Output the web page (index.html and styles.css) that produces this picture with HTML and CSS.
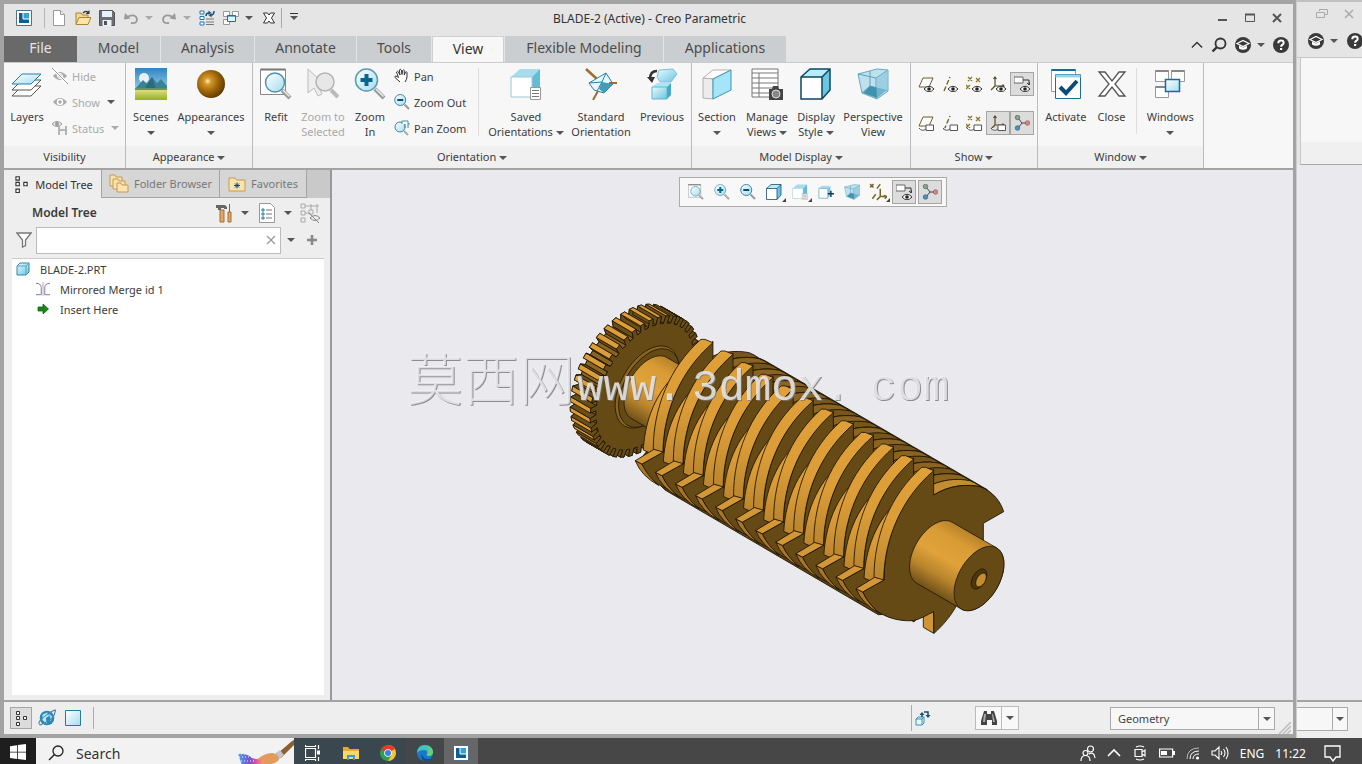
FILE: index.html
```html
<!DOCTYPE html>
<html lang="en">
<head>
<meta charset="utf-8">
<title>BLADE-2 (Active) - Creo Parametric</title>
<link rel="stylesheet" href="styles.css">
</head>
<body>
<svg class="sprite" aria-hidden="true">
  <defs>
    <linearGradient id="glass" x1="0" y1="0" x2="1" y2="1"><stop offset="0" stop-color="#fff"/><stop offset="1" stop-color="#a5dcf0"/></linearGradient>
    <linearGradient id="cyan" x1="0" y1="0" x2="1" y2="1"><stop offset="0" stop-color="#e9f9fe"/><stop offset="1" stop-color="#6cc4e0"/></linearGradient>
    <linearGradient id="sky" x1="0" y1="0" x2="0" y2="1"><stop offset="0" stop-color="#2c85c4"/><stop offset="1" stop-color="#d5eef8"/></linearGradient>
    <linearGradient id="grass" x1="0" y1="0" x2="0" y2="1"><stop offset="0" stop-color="#e3dd7c"/><stop offset="1" stop-color="#93ad2b"/></linearGradient>
    <linearGradient id="edge" x1="0" y1="0" x2="1" y2="1"><stop offset="0" stop-color="#1673c4"/><stop offset="1" stop-color="#5dd879"/></linearGradient>
    <linearGradient id="brush" x1="0" y1="0" x2="1" y2="0"><stop offset="0" stop-color="#4aa4f0"/><stop offset=".45" stop-color="#7a4fd0"/><stop offset=".7" stop-color="#e0559a"/><stop offset="1" stop-color="#f0a860"/></linearGradient>
    <radialGradient id="gold" cx=".38" cy=".4" r=".65"><stop offset="0" stop-color="#fff3c0"/><stop offset=".18" stop-color="#d99a2c"/><stop offset=".6" stop-color="#9a6208"/><stop offset="1" stop-color="#5c3902"/></radialGradient>
    <linearGradient id="shaft"><stop offset="0" stop-color="#b98329"/><stop offset=".2" stop-color="#d99b35"/><stop offset=".5" stop-color="#e0a23a"/><stop offset=".75" stop-color="#b8842c"/><stop offset="1" stop-color="#6f5119"/></linearGradient>
    <linearGradient id="rim" x1="0" y1="0" x2="0" y2="1"><stop offset="0" stop-color="#dfa038"/><stop offset=".5" stop-color="#dc9d38"/><stop offset="1" stop-color="#b9842e"/></linearGradient>

    <symbol id="i-app" viewBox="0 0 16 16"><path d="M.5.5h15v15H.5z" fill="#fff" stroke="#4d6f8c"/><path d="M3 3h10v10H3z" fill="#0b5f94"/><path d="M7 3h6v6H7z" fill="#2ba6dc"/><path d="M7 3v6h6" fill="none" stroke="#fff"/></symbol>
    <symbol id="i-new" viewBox="0 0 16 16"><path d="M2.500.5h7l4 4v11h-11z" fill="#fff" stroke="#999"/><path d="M9.500.5v4h4" fill="#eee" stroke="#999"/></symbol>
    <symbol id="i-open" viewBox="0 0 16 16"><path d="M1 14V3h5l1.500 2H13v3" fill="#f5d98b" stroke="#a8843a"/><path d="M1 14.500 4 7.500h12l-3 7z" fill="#fbe6a5" stroke="#a8843a"/><path d="M8 3q3-3 5-.5" fill="none" stroke="#333" stroke-width="1.300"/><path d="M14.500 0v4h-4z" fill="#333"/></symbol>
    <symbol id="i-save" viewBox="0 0 16 16"><path d="M.5.5h13l2 2v13H.5z" fill="#6b6f75" stroke="#555"/><path d="M3 1h10v6H3z" fill="#e6f3fa"/><path d="M3.500 10h9v6h-9z" fill="#eee"/><path d="M5 11h3v4H5z" fill="#456"/></symbol>
    <symbol id="i-undo" viewBox="0 0 16 16"><path d="M5 6.500q8-3 9 2.500 0 5-6 4" fill="none" stroke="#999" stroke-width="1.800"/><path d="M1 9.500 2 3l5.500 5.500z" fill="#999"/></symbol>
    <symbol id="i-regen" viewBox="0 0 16 16"><path d="M1 1h4v3H1zM1 6.500h4v3H1zM1 12h4v3H1z" fill="#fff" stroke="#2779a8"/><path d="M7 9h8M7 12h8M7 14.500h8" stroke="#777"/><path d="M7 6q0-3 3-3M15 1q0 4-3 4" fill="none" stroke="#13517c" stroke-width="1.500"/><path d="M9.500.5v5l3-2.500zM12.500 2.500v5l-3-2.500z" fill="#13517c"/></symbol>
    <symbol id="i-wins" viewBox="0 0 16 16"><path d="M.5 1.500h6v5h-6zM9.500 1.500h6v5h-6zM.5 9.500h6v5h-6z" fill="#fff" stroke="#999"/><path d="M4.500 5.500h8v6h-8z" fill="#e4f5fb" stroke="#1c7396"/><path d="M4.500 5.800h8" stroke="#1c7396" stroke-width="1.500"/></symbol>
    <symbol id="i-closex" viewBox="0 0 32 32"><path d="M3 4h6l7 9 7-9h6L19 16l10 12h-6l-7-9-7 9H3l10-12z" fill="#fff" stroke="#555" stroke-width="1.300"/></symbol>
    <symbol id="i-closexs" viewBox="0 0 16 16"><path d="M2.500 3h4L8 5l1.500-2h4L10.500 8l3 5h-4L8 11l-1.500 2h-4l3-5z" fill="#fff" stroke="#333"/></symbol>
    <symbol id="i-search" viewBox="0 0 16 16"><circle cx="9.500" cy="6.500" r="5" fill="none" stroke="currentColor" stroke-width="1.800"/><path d="m6 10-4.500 4.500" stroke="currentColor" stroke-width="2.400"/></symbol>
    <symbol id="i-learn" viewBox="0 0 16 16"><circle cx="8" cy="8" r="8" fill="#3a3a3a"/><path d="M2 6.500 8 3.500l6 3-6 3z" fill="none" stroke="#fff" stroke-width="1.200"/><path d="M4 8.500v3q4 2.500 8 0v-3l-4 2z" fill="#fff"/></symbol>
    <symbol id="i-help" viewBox="0 0 16 16"><circle cx="8" cy="8" r="8" fill="#3a3a3a"/><path d="M5.300 6.200q0-2.700 2.700-2.700t2.700 2.400c0 1.900-2.600 1.700-2.600 3.900" fill="none" stroke="#fff" stroke-width="2"/><path d="M7 11h2.200v2H7z" fill="#fff"/></symbol>

    <symbol id="i-layers" viewBox="0 0 32 32"><g stroke="#555"><path d="M1 28h19l10-10H11z" fill="#fff"/><path d="M1 22h19l10-10H11z" fill="#fff"/><path d="M1 16h19l10-10H11z" fill="url(#glass)" stroke="#2580a6"/></g></symbol>
    <symbol id="i-eye" viewBox="0 0 16 16"><path d="M1 8q7-8 14 0-7 8-14 0z" fill="#aaa"/><circle cx="8" cy="8" r="2.500" fill="#aaa" stroke="#fff" stroke-width="1.500"/></symbol>
    <symbol id="i-hide" viewBox="0 0 16 16"><path d="M1 8q7-8 14 0-7 8-14 0z" fill="#aaa"/><circle cx="8" cy="8" r="2.500" fill="#999" stroke="#fff"/><path d="m0 0 16 16" stroke="#fff" stroke-width="3"/><path d="m0 0 16 16" stroke="#999"/></symbol>
    <symbol id="i-status" viewBox="0 0 16 16"><path d="M0 4q5-5 10 0-5 5-10 0z" fill="#eee" stroke="#999"/><circle cx="5" cy="4" r="2" fill="#999"/><path d="M6 6h9v9H6z" fill="#b5b5b5"/><path d="M8 6h5v3H8zM8 11h5v4H8z" fill="#f3f3f3"/></symbol>
    <symbol id="i-scenes" viewBox="0 0 32 32"><path d="M0 0h32v32H0z" fill="url(#sky)"/><circle cx="9" cy="10" r="5" fill="#fff" opacity=".85"/><path d="m0 21 8-9 4 4 5-7 5 6 4-4 6 7v6H0z" fill="#3b8295"/><path d="m12 16 5-7 4 12H10z" fill="#2b6b80"/><path d="M0 20h32v3H0z" fill="#62965b"/><path d="M0 22h32v10H0z" fill="url(#grass)"/></symbol>
    <symbol id="i-ball" viewBox="0 0 32 32"><circle cx="16" cy="16" r="14" fill="url(#gold)"/></symbol>
    <symbol id="i-refit" viewBox="0 0 32 32"><path d="M.500 1.500h25v25H.500z" fill="#fff" stroke="#888"/><path d="M.5 1.500h25" stroke="#777" stroke-width="2"/><path d="m22 22 8 8" stroke="#999" stroke-width="4"/><path d="m23 22 6.500 6.500" stroke="#eee" stroke-width="1.500"/><circle cx="15" cy="14.500" r="9.500" fill="url(#glass)" stroke="#4b90ad" stroke-width="1.400"/></symbol>
    <symbol id="i-zsel" viewBox="0 0 32 32"><path d="m1 1 16 15-6 2 4 8-4 2-4-8-6 5z" fill="#eee" stroke="#bbb"/><path d="m24 22 7 7" stroke="#bbb" stroke-width="4"/><circle cx="18" cy="14" r="9" fill="#e7e7e7" stroke="#b5b5b5" stroke-width="1.500"/></symbol>
    <symbol id="i-zin" viewBox="0 0 32 32"><path d="m21 21 9 9" stroke="#999" stroke-width="4"/><path d="m22 21 7.500 7.500" stroke="#eee" stroke-width="1.500"/><circle cx="12.500" cy="12" r="11" fill="url(#glass)" stroke="#5a9ab4" stroke-width="1.500"/><path d="M12.500 6v12M6.500 12h12" stroke="#08658e" stroke-width="4"/></symbol>
    <symbol id="i-zout" viewBox="0 0 32 32"><path d="m21 21 9 9" stroke="#999" stroke-width="4"/><circle cx="12.500" cy="12" r="11" fill="url(#glass)" stroke="#3c87a8" stroke-width="2"/><path d="M6.500 12h12" stroke="#084f74" stroke-width="4"/></symbol>
    <symbol id="i-pan" viewBox="0 0 16 16"><path d="M6 14 1 9.500Q.5 8 2 8l2.500 1.500L2.500 4q.8-1.500 2 0l1.500 3-.7-5q1-1.500 2 0l.7 4.500.5-4q1-1.200 1.800 0v4.500l1.200-3q1.200-.8 1.500.5L13 9q-.5 3-2 5" fill="#fff" stroke="#333"/></symbol>
    <symbol id="i-pzoom" viewBox="0 0 16 16"><circle cx="6" cy="7" r="5" fill="url(#glass)" stroke="#3c87a8"/><path d="m10 11 4 4" stroke="#aaa" stroke-width="2"/><path d="M8 4V1h6v3h2M11 4v4M14 4v4" fill="#fff" stroke="#4a8ba5"/></symbol>
    <symbol id="i-saved" viewBox="0 0 32 32"><path d="m1 9 9-8h20l-8 8z" fill="#a6dcec"/><path d="m22 9 8-8v20l-8 8z" fill="#62bcd4"/><path d="M1 9h21v20H1z" fill="#fff" stroke="#9bc9d8"/><path d="M20.500 19.500h10v12h-10z" fill="#fff" stroke="#999"/><path d="M22 22.500h7M22 25.500h7M22 28.500h7" stroke="#777"/></symbol>
    <symbol id="i-std" viewBox="0 0 32 32"><path d="m1 1 11 10" stroke="#a06b2b" stroke-width="2.500"/><path d="m4 15 17-10 7 11-9 9-10-3z" fill="#e6f8fd" stroke="#2580a6"/><path d="m17 14 11 2-9 9-5-4z" fill="#3f9fb9"/><path d="m4 15 13-1 4-9M17 14l-5 9" fill="none" stroke="#2580a6"/><path d="M24 15h8M13 23 8 32" stroke="#a06b2b" stroke-width="2"/></symbol>
    <symbol id="i-prev" viewBox="0 0 32 32"><path d="m13 2 14-1 4 5-6 8H14l-3-5z" fill="url(#cyan)" stroke="#7cc2d8"/><path d="M6 19 11 15h14l-3 4z" fill="#aee5f4"/><path d="M6 19h15v12H6z" fill="url(#cyan)" stroke="#65b7d0"/><path d="m21 19 4-4v12l-4 4z" fill="#4aa9c6"/><path d="M11 3q-7 0-7 8" fill="none" stroke="#333" stroke-width="2.500"/><path d="M1 9h8l-3 6z" fill="#333"/></symbol>
    <symbol id="i-section" viewBox="0 0 32 32"><path d="m2 10 10-8h18L12 11z" fill="#fff" stroke="#c9a9a9"/><path d="M2 10l10 1v20l-10-1z" fill="#ececec" stroke="#b0b0b0"/><path d="m12 11 18-9v20L12 31z" fill="#a6e4fa" stroke="#3297b8"/></symbol>
    <symbol id="i-mviews" viewBox="0 0 32 32"><path d="M1 1h26v28H1zM1 5h26M1 10h26M1 15h26M1 20h26M1 25h26M8 5v24" fill="#fff" stroke="#777"/><path d="M18 21h3l1-3h5l1 3h4v11H18z" fill="#444"/><circle cx="25" cy="26" r="4" fill="#888" stroke="#ddd"/></symbol>
    <symbol id="i-cube" viewBox="0 0 32 32"><path d="m1 9 9-8h20l-8 8z" fill="#b8ecfb"/><path d="m22 9 8-8v21l-8 9z" fill="#6cc6e2"/><path d="M1 9h21v22H1z" fill="#fff"/><path d="M1 31V9l9-8h20v21l-8 9zM1 9h21v22M22 9l8-8" fill="none" stroke="#0b4763" stroke-width="1.500"/></symbol>
    <symbol id="i-persp" viewBox="0 0 32 32"><path d="M1 6 20 1l11 1v21L20 31 5 25z" fill="#bfe1ee" stroke="#6ea8bf"/><path d="m1 6 18 4 12-8M19 10v21M13 3v15l18 5M13 18 5 25" fill="none" stroke="#5da1ba"/><path d="m13 18 16 4-9 8-14-5z" fill="#3f93b1"/><path d="m19 10 12-8v21l-11 8z" fill="#88c5da" opacity=".65"/></symbol>
    <symbol id="i-activate" viewBox="0 0 32 32"><path d="M1.500 1.500h24v22h-24z" fill="#fff" stroke="#999"/><path d="M1.500 2h24" stroke="#156b95" stroke-width="2"/><path d="M5.500 6.500h25v24h-25z" fill="#fff" stroke="#1c6f97"/><path d="M5.500 8h25" stroke="#9bd2e8" stroke-width="3"/><path d="m10 19 6 6L27 13" fill="none" stroke="#074d76" stroke-width="4"/></symbol>
    <symbol id="i-winsb" viewBox="0 0 32 32"><path d="M1.500 2.500h13v11h-13zM17.500 2.500h13v11h-13zM1.500 18.500h13v11h-13z" fill="#fff" stroke="#999"/><path d="M1.500 3h13M17.500 3h13M1.500 19h13" stroke="#888" stroke-width="2"/><path d="M11.500 11.500h14v12h-14z" fill="url(#glass)" stroke="#0d7199" stroke-width="1.500"/></symbol>

    <symbol id="b-eye" viewBox="0 0 16 16"><path d="M6 13q5-5.500 10 0-5 5.500-10 0z" fill="#fff" stroke="#333"/><circle cx="11" cy="13" r="1.800" fill="#222"/></symbol>
    <symbol id="b-tag" viewBox="0 0 16 16"><path d="M8 10h7.500v5.500H8zM1 13q3 4 7 1" fill="#fff" stroke="#555"/></symbol>
    <symbol id="i-plane" viewBox="0 0 16 16"><path d="m1 11 4-9h10l-4 9z" fill="#fff" stroke="#6e5b26"/></symbol>
    <symbol id="i-axis" viewBox="0 0 16 16"><path d="M2 15 8 1" stroke="#776320" stroke-width="1.400" stroke-dasharray="5 2"/></symbol>
    <symbol id="i-points" viewBox="0 0 16 16"><path d="m2 1 4 4m0-4L2 5m8-3 4 4m0-4-4 4M0 9l4 4m0-4-4 4" stroke="#8a7420" stroke-width="1.300"/></symbol>
    <symbol id="i-csys" viewBox="0 0 16 16"><path d="M5 1v9h9M5 10l-4 4M3.500 3 5 1l1.500 2M12.500 8.500l1.500 1.500-1.500 1.500" fill="none" stroke="#5b4b22" stroke-width="1.200"/></symbol>
    <symbol id="i-annot" viewBox="0 0 16 16"><path d="M0 1h9v6H0z" fill="#fff" stroke="#666"/><path d="M9 4h6v5m-2-2 2 2 1-3" fill="none" stroke="#333"/></symbol>
    <symbol id="i-spin" viewBox="0 0 16 16"><path d="m4 3 4 5h6M8 8l-4 5" fill="none" stroke="#444"/><circle cx="3.500" cy="2.500" r="2.300" fill="#7fa58d" stroke="#555" stroke-width=".6"/><circle cx="13.500" cy="8" r="2.300" fill="#d28a82" stroke="#944" stroke-width=".6"/><circle cx="3.500" cy="13" r="2.300" fill="#4d91bd" stroke="#356" stroke-width=".6"/></symbol>
    <symbol id="i-dtm" viewBox="0 0 16 16"><path d="m1 1 3 3m0-3L1 4m6 1 3-4M3 14l3-4M10 5v7h6m-6 0-3 3m6-4 3 1-2 2" fill="none" stroke="#77631f" stroke-width="1.300"/></symbol>

    <symbol id="i-tree" viewBox="0 0 16 16"><path d="M3.500 1.500h3v3h-3zM3.500 6.500h3v3h-3zM3.500 12.500h3v3h-3zM10.500 6.500h3v3h-3z" fill="#fff" stroke="#333"/></symbol>
    <symbol id="i-folders" viewBox="0 0 20 20"><g fill="#fae3ae" stroke="#c49a50"><path d="M1 12V1h5l1 2h6v9z"/><path d="M4 15V5h5l1 2h6v8z"/><path d="M8 18V9h4l1 2h6v7z"/></g></symbol>
    <symbol id="i-fav" viewBox="0 0 18 16"><path d="M1 15V2h6l1.500 2H17v11z" fill="#fae3ae" stroke="#c49a50"/><path d="M9 6.500v6M6 9.500h6M7 7.500l4 4m0-4-4 4" stroke="#144a70"/></symbol>
    <symbol id="i-tools" viewBox="0 0 18 20"><path d="M1 2h9l2 2v2H9V5H6v2H3V5H1z" fill="#666"/><path d="M5 7h4v12H5z" fill="#e0a768" stroke="#a56d38"/><path d="M14.500 1v8" stroke="#666"/><path d="M13 9h3v10h-3z" fill="#e0a768" stroke="#a56d38"/></symbol>
    <symbol id="i-list" viewBox="0 0 16 20"><path d="M.5.5h11l4 4v15H.5z" fill="#fff" stroke="#999"/><path d="M3 6h2v2H3zM3 10h2v2H3zM3 14h2v2H3z" fill="#fff" stroke="#2779a8"/><path d="M7 7h6M7 11h6M7 15h6" stroke="#777"/></symbol>
    <symbol id="i-treeoff" viewBox="0 0 20 20"><g fill="none" stroke="#aaa"><path d="M1 1h4v4H1zM1 8h4v4H1zM1 15h4v4H1zM9 7h4v4H9zM5 10h4M5 3h14M11 1v6M17 1v9"/><path d="M10 15q5-5 10 0-5 5-10 0zM9 10l10 10" stroke="#888"/></g></symbol>
    <symbol id="i-filter" viewBox="0 0 16 16"><path d="M.8 1h14.400L9.500 8v5.500l-3 1.500V8z" fill="#fff" stroke="#777" stroke-width="1.300"/></symbol>
    <symbol id="i-part" viewBox="0 0 14 14"><path d="m1 4 3-3h9v9l-3 3H1z" fill="url(#cyan)" stroke="#3089a8"/><path d="M1 4h9v9M10 4l3-3" fill="none" stroke="#4eabca"/></symbol>
    <symbol id="i-mirror" viewBox="0 0 16 16"><path d="M0 1.500q6 0 6 5v8H0M16 1.500q-6 0-6 5v8h6" fill="none" stroke="#70689a"/><path d="M8 0v16" stroke="#c09bb0"/></symbol>
    <symbol id="i-arrow" viewBox="0 0 12 12"><path d="M1 4h5V1l5.500 5L6 11V8H1z" fill="#168a12" stroke="#075a08" stroke-width=".7"/></symbol>

    <symbol id="i-globe" viewBox="0 0 16 16"><circle cx="8" cy="8" r="6.500" fill="#2389bb"/><path d="m4 5 4-2 2 3-3 2 1 5-4-3z" fill="#bde8f4"/><path d="m10 4 3 3-2 4z" fill="#a3d8ea"/><path d="M2 14Q-2 12 8 5t7-2q0 4-7 8t-6 3z" fill="none" stroke="#5484ab"/></symbol>
    <symbol id="i-square" viewBox="0 0 16 16"><path d="M.5.5h15v15H.5z" fill="url(#glass)" stroke="#287c92"/></symbol>
    <symbol id="i-regens" viewBox="0 0 16 16"><path d="M1 9h6v6H1z" fill="#e9f8fc" stroke="#2f95b8"/><path d="m1 9 2-2h6v6l-2 2M7 9l2-2" fill="none" stroke="#2f95b8"/><path d="M7 7V4M9 2h4v4" fill="none" stroke="#12526f" stroke-width="1.500"/><path d="M4.500 5h5L7 2zM10.500 5h5L13 8z" fill="#12526f"/></symbol>
    <symbol id="i-bino" viewBox="0 0 16 16"><path d="M3 1h3v3h4V1h3l3 10v4h-5v-5H6v5H0v-4z" fill="#444"/><path d="M3 4h2l-1 8H2zM11 4h1l2 8h-2z" fill="#aaa"/></symbol>

    <symbol id="i-win" viewBox="0 0 16 16"><path d="M0 2.300 7 1.200v6.500H0zM7.800 1 16 0v7.700H7.800zM0 8.500h7V15l-7-1.100zM7.800 8.500H16V16l-8.200-1z" fill="#fff"/></symbol>
    <symbol id="i-lens" viewBox="0 0 16 16"><circle cx="10" cy="6" r="5" fill="none" stroke="#222" stroke-width="1.300"/><path d="M6.500 9.500 1 15" stroke="#222" stroke-width="1.400"/></symbol>
    <symbol id="i-brush" viewBox="0 0 56 30"><path d="M39 16 54 3l2-1v5L43 20z" fill="#8d5d34"/><path d="m35 17 7-5 4 5-7 6z" fill="#c3c3c8"/><path d="M18 22q10-8 17-7 8 3 5 8-8 6-24 3z" fill="#e39b5c"/><path d="M0 16q8-1 14 4l12 3-2 7H5z" fill="url(#brush)"/><path d="M0 16h16M1 19h17M3 23h14" stroke="#e8f2ff" stroke-dasharray="1 2"/></symbol>
    <symbol id="i-task" viewBox="0 0 16 16"><path d="M.5 3.500h10v9H.500zM.5 0v1.500h10V0M.5 16v-1.500h10V16M13.500 0v4M13.500 12v4" fill="none" stroke="#fff" stroke-width="1.200"/><path d="M12 5.500h3v4h-3z" fill="#fff"/></symbol>
    <symbol id="i-folder" viewBox="0 0 16 14"><path d="M0 13V1h5l1.500 2H16v10z" fill="#e5ac2b"/><path d="M0 5h16v8H0z" fill="#fcd85f"/><path d="M4 14V9h8v5h-2v-3H6v3z" fill="#3b96dc"/></symbol>
    <symbol id="i-chrome" viewBox="0 0 16 16"><path d="M8 8V0a8 8 0 0 1 0 16z" fill="#f9c52c"/><path d="M8 8 14.900 4A8 8 0 0 0 1.100 4z" fill="#e33b2e"/><path d="M8 8 1.100 4A8 8 0 0 0 8 16l3.500-6z" fill="#2da14e"/><circle cx="8" cy="8" r="3.800" fill="#fff"/><circle cx="8" cy="8" r="3" fill="#3d7fe8"/></symbol>
    <symbol id="i-edge" viewBox="0 0 16 16"><circle cx="8" cy="8" r="8" fill="#1b78c9"/><path d="M0 7q1-7 8-7t8 7q0 4-5 4-2-1-1-2 1-4-3-4-5 0-7 3z" fill="#43c3c0"/><path d="M11 1q5 2 5 6 0 4-5 4-2-1-1-2 3-3 1-8z" fill="#65d36d"/><path d="M5 9q1 5 6 5 2 0 4-1-3 4-8 3Q3 14 5 9z" fill="#0d4f9b"/></symbol>
    <symbol id="i-people" viewBox="0 0 16 16"><g fill="none" stroke="#fff" stroke-width="1.200"><circle cx="10.500" cy="4" r="3"/><circle cx="5.500" cy="8" r="2.500"/><path d="M1 16q0-5.500 4.500-5.500T10 16M9 9q5-3 6 4"/></g></symbol>
    <symbol id="i-up" viewBox="0 0 14 14"><path d="m1 10 6-6 6 6" fill="none" stroke="currentColor" stroke-width="1.600"/></symbol>
    <symbol id="i-cam" viewBox="0 0 14 16"><path d="M2 4.500h7v7H2zM9 7l3-2v6l-3-2M3 2q4-2 8 0M3 14q4 2 8 0" fill="none" stroke="#fff" stroke-width="1.200"/></symbol>
    <symbol id="i-batt" viewBox="0 0 16 10"><path d="M.6 1h13v8H.6z" fill="none" stroke="#fff" stroke-width="1.200"/><path d="M2 3h6v4H2zM14 3h2v4h-2z" fill="#fff"/></symbol>
    <symbol id="i-wifi" viewBox="0 0 14 14"><g fill="none" stroke="#fff"><path d="M1 13Q1 2 13 2" opacity=".6"/><path d="M4 13q0-8 9-8M7 13q0-5 6-5"/></g><circle cx="11.500" cy="12" r="1.600" fill="#fff"/></symbol>
    <symbol id="i-vol" viewBox="0 0 18 14"><path d="M1 5h3l4-4v12L4 9H1zM10 5q1.500 2 0 4M12.500 3q3 4 0 8M15 1q4 6 0 12" fill="none" stroke="#fff" stroke-width="1.100"/></symbol>
    <symbol id="i-note" viewBox="0 0 18 18"><path d="M1 2h15v11h-4l-3 4-3-4H1z" fill="none" stroke="#fff" stroke-width="1.300"/></symbol>
  </defs>
</svg>

<div class="desktop">
  <div class="window">
    <header class="titlebar">
      <div class="quick">
        <svg class="i16 app-icon"><use href="#i-app"/></svg>
        <button aria-label="New"><svg class="i16"><use href="#i-new"/></svg></button>
        <button aria-label="Open"><svg class="i16"><use href="#i-open"/></svg></button>
        <button aria-label="Save"><svg class="i16"><use href="#i-save"/></svg></button>
        <button aria-label="Undo"><svg class="i16"><use href="#i-undo"/></svg><i class="caret dim"></i></button>
        <button aria-label="Redo"><svg class="i16 flip"><use href="#i-undo"/></svg><i class="caret dim"></i></button>
        <button aria-label="Regenerate"><svg class="i16"><use href="#i-regen"/></svg></button>
        <button aria-label="Windows"><svg class="i16"><use href="#i-wins"/></svg><i class="caret"></i></button>
        <button aria-label="Close model"><svg class="i16"><use href="#i-closexs"/></svg></button>
        <button class="customize" aria-label="Customize toolbar"><i class="caret lined"></i></button>
      </div>
      <h1>BLADE-2 (Active) - Creo Parametric</h1>
      <div class="controls">
        <button aria-label="Minimize"><svg class="i12" viewBox="0 0 12 12"><path d="M1 8h9" stroke="#555" stroke-width="2"/></svg></button>
        <button aria-label="Maximize"><svg class="i12" viewBox="0 0 12 12"><path d="M1.500 2.500h9v7h-9z" fill="none" stroke="#555"/><path d="M1 2.500h10" stroke="#555" stroke-width="2"/></svg></button>
        <button aria-label="Close"><svg class="i12" viewBox="0 0 12 12"><path d="m2 2 8 8m0-8-8 8" stroke="#555" stroke-width="2"/></svg></button>
      </div>
    </header>

    <nav class="tabs">
      <button class="tab file">File</button>
      <button class="tab model">Model</button>
      <button class="tab analysis">Analysis</button>
      <button class="tab annotate">Annotate</button>
      <button class="tab tools">Tools</button>
      <button class="tab view active">View</button>
      <button class="tab flexible">Flexible Modeling</button>
      <button class="tab apps">Applications</button>
      <div class="help-tools">
        <button aria-label="Collapse ribbon"><svg class="i12 dark"><use href="#i-up"/></svg></button>
        <button aria-label="Search commands"><svg class="i16 dark"><use href="#i-search"/></svg></button>
        <button aria-label="Learning"><svg class="i16"><use href="#i-learn"/></svg><i class="caret"></i></button>
        <button aria-label="Help"><svg class="i16"><use href="#i-help"/></svg></button>
      </div>
    </nav>

    <section class="ribbon">
      <div class="group g-visibility">
        <div class="items">
          <button class="big w46"><svg class="i32"><use href="#i-layers"/></svg><span>Layers</span></button>
          <div class="stack">
            <button class="small off"><svg class="i16"><use href="#i-hide"/></svg>Hide</button>
            <button class="small off"><svg class="i16"><use href="#i-eye"/></svg>Show <i class="caret"></i></button>
            <button class="small off"><svg class="i16"><use href="#i-status"/></svg>Status <i class="caret dim"></i></button>
          </div>
        </div>
        <footer>Visibility</footer>
      </div>
      <div class="group g-appearance">
        <div class="items">
          <button class="big w50"><svg class="i32"><use href="#i-scenes"/></svg><span>Scenes<br><i class="caret"></i></span></button>
          <button class="big w70"><svg class="i32"><use href="#i-ball"/></svg><span>Appearances<br><i class="caret"></i></span></button>
        </div>
        <footer>Appearance <i class="caret"></i></footer>
      </div>
      <div class="group g-orientation">
        <div class="items">
          <button class="big w46"><svg class="i32"><use href="#i-refit"/></svg><span>Refit</span></button>
          <button class="big w48 off"><svg class="i32"><use href="#i-zsel"/></svg><span>Zoom to<br>Selected</span></button>
          <button class="big w46"><svg class="i32"><use href="#i-zin"/></svg><span>Zoom<br>In</span></button>
          <div class="stack zoom-stack">
            <button class="small"><svg class="i16"><use href="#i-pan"/></svg>Pan</button>
            <button class="small"><svg class="i16"><use href="#i-zout"/></svg>Zoom Out</button>
            <button class="small"><svg class="i16"><use href="#i-pzoom"/></svg>Pan Zoom</button>
          </div>
          <button class="big w84 first"><svg class="i32"><use href="#i-saved"/></svg><span>Saved<br>Orientations <i class="caret"></i></span></button>
          <button class="big w66"><svg class="i32"><use href="#i-std"/></svg><span>Standard<br>Orientation</span></button>
          <button class="big w56"><svg class="i32"><use href="#i-prev"/></svg><span>Previous</span></button>
        </div>
        <footer>Orientation <i class="caret"></i></footer>
      </div>
      <div class="group g-display">
        <div class="items">
          <button class="big w50"><svg class="i32"><use href="#i-section"/></svg><span>Section<br><i class="caret"></i></span></button>
          <button class="big w50"><svg class="i32"><use href="#i-mviews"/></svg><span>Manage<br>Views <i class="caret"></i></span></button>
          <button class="big w48"><svg class="i32"><use href="#i-cube"/></svg><span>Display<br>Style <i class="caret"></i></span></button>
          <button class="big w66"><svg class="i32"><use href="#i-persp"/></svg><span>Perspective<br>View</span></button>
        </div>
        <footer>Model Display <i class="caret"></i></footer>
      </div>
      <div class="group g-show">
        <div class="items show-grid">
          <button aria-label="Plane display"><svg class="i16"><use href="#i-plane"/><use href="#b-eye"/></svg></button>
          <button aria-label="Axis display"><svg class="i16"><use href="#i-axis"/><use href="#b-eye"/></svg></button>
          <button aria-label="Point display"><svg class="i16"><use href="#i-points"/><use href="#b-eye"/></svg></button>
          <button aria-label="Csys display"><svg class="i16"><use href="#i-csys"/><use href="#b-eye"/></svg></button>
          <button class="on" aria-label="Annotation display"><svg class="i16"><use href="#i-annot"/><use href="#b-eye"/></svg></button>
          <button aria-label="Plane tags"><svg class="i16"><use href="#i-plane"/><use href="#b-tag"/></svg></button>
          <button aria-label="Axis tags"><svg class="i16"><use href="#i-axis"/><use href="#b-tag"/></svg></button>
          <button aria-label="Point tags"><svg class="i16"><use href="#i-points"/><use href="#b-tag"/></svg></button>
          <button class="on" aria-label="Csys tags"><svg class="i16"><use href="#i-csys"/><use href="#b-tag"/></svg></button>
          <button class="on" aria-label="Spin center"><svg class="i16"><use href="#i-spin"/></svg></button>
        </div>
        <footer>Show <i class="caret"></i></footer>
      </div>
      <div class="group g-window">
        <div class="items">
          <button class="big w56"><svg class="i32"><use href="#i-activate"/></svg><span>Activate</span></button>
          <button class="big w36"><svg class="i32"><use href="#i-closex"/></svg><span>Close</span></button>
          <i class="rule"></i>
          <button class="big w66"><svg class="i32"><use href="#i-winsb"/></svg><span>Windows<br><i class="caret"></i></span></button>
        </div>
        <footer>Window <i class="caret"></i></footer>
      </div>
    </section>

    <main>
      <aside class="panel">
        <nav class="panel-tabs">
          <button class="ptab active"><svg class="i18"><use href="#i-tree"/></svg>Model Tree</button>
          <button class="ptab folders"><svg class="i20"><use href="#i-folders"/></svg>Folder Browser</button>
          <button class="ptab favs"><svg class="i18"><use href="#i-fav"/></svg>Favorites</button>
        </nav>
        <div class="panel-head">
          <h2>Model Tree</h2>
          <button aria-label="Settings"><svg class="i20"><use href="#i-tools"/></svg><i class="caret"></i></button>
          <button aria-label="Show list"><svg class="i20"><use href="#i-list"/></svg><i class="caret"></i></button>
          <button aria-label="Hide tree"><svg class="i20"><use href="#i-treeoff"/></svg></button>
        </div>
        <div class="filter">
          <svg class="i16"><use href="#i-filter"/></svg>
          <label class="filter-box"><input type="text" aria-label="Filter model tree"><svg class="i10" viewBox="0 0 10 10"><path d="m1 1 8 8m0-8-8 8" stroke="#999" stroke-width="1.300"/></svg></label>
          <button aria-label="Filter options"><i class="caret"></i></button>
          <button aria-label="Add filter"><svg class="i12" viewBox="0 0 12 12"><path d="M6 1v10M1 6h10" stroke="#888" stroke-width="2.600"/></svg></button>
        </div>
        <ul class="tree">
          <li><svg class="i14"><use href="#i-part"/></svg>BLADE-2.PRT</li>
          <li class="child"><svg class="i14"><use href="#i-mirror"/></svg>Mirrored Merge id 1</li>
          <li class="child"><svg class="i12"><use href="#i-arrow"/></svg>Insert Here</li>
        </ul>
      </aside>

      <section class="canvas">
        <svg class="scene" viewBox="332 170 961 530" role="img" aria-label="Blade roller with gear">
          <g id="gear"></g>
          <g id="blades" transform="translate(780 380) scale(.33333)"></g>
          <g id="front"></g>
          <g class="mark">
            <text class="mark-cjk" x="407" y="400">莫西网</text>
            <text x="577" y="400">www.</text>
            <text x="692" y="400">3dmox.</text>
            <text x="870" y="400">com</text>
          </g>
        </svg>
        <div class="view-bar">
          <button aria-label="Refit"><svg class="i16"><use href="#i-refit"/></svg></button>
          <button aria-label="Zoom in"><svg class="i16"><use href="#i-zin"/></svg></button>
          <button aria-label="Zoom out"><svg class="i16"><use href="#i-zout"/></svg></button>
          <button class="more" aria-label="Display style"><svg class="i16"><use href="#i-cube"/></svg></button>
          <button class="more" aria-label="Saved orientations"><svg class="i16"><use href="#i-saved"/></svg></button>
          <button aria-label="View manager"><svg class="i16" viewBox="0 0 18 18"><path d="m1 5 3-3h9l-2 3z" fill="#a6dcec"/><path d="M1 5h10v11H1z" fill="#fff" stroke="#76b5c9"/><path d="m11 5 3-3v10l-3 4z" fill="#7cc8dd"/><path d="M11 11h7M14.500 7.500v7" stroke="#123a50" stroke-width="1.600"/></svg></button>
          <button aria-label="Perspective"><svg class="i16"><use href="#i-persp"/></svg></button>
          <button class="more" aria-label="Datum display"><svg class="i18"><use href="#i-dtm"/></svg></button>
          <button class="on" aria-label="Annotations"><svg class="i16"><use href="#i-annot"/><use href="#b-eye"/></svg></button>
          <button class="on" aria-label="Spin center"><svg class="i16"><use href="#i-spin"/></svg></button>
        </div>
      </section>
    </main>

    <footer class="status">
      <button class="on" aria-label="Model tree"><svg class="i16"><use href="#i-tree"/></svg></button>
      <button aria-label="Browser"><svg class="i18"><use href="#i-globe"/></svg></button>
      <button aria-label="Full screen"><svg class="i16"><use href="#i-square"/></svg></button>
      <i class="divider"></i>
      <button class="regen" aria-label="Regeneration status"><svg class="i16"><use href="#i-regens"/></svg></button>
      <div class="find"><button aria-label="Find"><svg class="i16"><use href="#i-bino"/></svg></button><button aria-label="Find options"><i class="caret"></i></button></div>
      <label class="select"><select aria-label="Selection filter"><option>Geometry</option></select><i class="caret"></i></label>
      <svg class="grip" viewBox="0 0 12 12"><path d="M0 12 12 0M4 12l8-8M8 12l4-4" stroke="#bbb" stroke-width="1.500"/></svg>
    </footer>
  </div>

  <div class="backdrop">
    <div class="back-top">
      <div class="back-controls">
        <svg class="i12" viewBox="0 0 12 12"><path d="M3.500 3V1.500h8v5H9M.5 4.500h8v5h-8z" fill="none" stroke="#aaa"/></svg>
        <svg class="i12" viewBox="0 0 12 12"><path d="m2 2 8 8m0-8-8 8" stroke="#aaa" stroke-width="1.600"/></svg>
      </div>
      <div class="back-help">
        <svg class="i16"><use href="#i-learn"/></svg><i class="caret"></i>
        <svg class="i16"><use href="#i-help"/></svg>
      </div>
    </div>
    <div class="back-ribbon"></div>
    <div class="back-canvas"></div>
    <div class="back-status"><div class="back-select"><i class="caret"></i></div></div>
  </div>
</div>

<footer class="taskbar">
  <button class="start" aria-label="Start"><svg class="i16"><use href="#i-win"/></svg></button>
  <label class="search"><svg class="i16"><use href="#i-lens"/></svg><input type="text" placeholder="Search" aria-label="Search"><svg class="brush"><use href="#i-brush"/></svg></label>
  <button class="task" aria-label="Task view"><svg class="i16"><use href="#i-task"/></svg></button>
  <button class="task" aria-label="File Explorer"><svg class="i16"><use href="#i-folder"/></svg></button>
  <button class="task" aria-label="Chrome"><svg class="i16"><use href="#i-chrome"/></svg></button>
  <button class="task" aria-label="Edge"><svg class="i16"><use href="#i-edge"/></svg></button>
  <button class="task current" aria-label="Creo"><svg class="i16"><use href="#i-app"/></svg></button>
  <div class="tray">
    <svg class="i16"><use href="#i-people"/></svg>
    <svg class="i14"><use href="#i-up"/></svg>
    <svg class="i16"><use href="#i-cam"/></svg>
    <svg class="i16"><use href="#i-batt"/></svg>
    <svg class="i14"><use href="#i-wifi"/></svg>
    <svg class="i18"><use href="#i-vol"/></svg>
    <span>ENG</span>
    <time>11:22</time>
    <svg class="i18 note"><use href="#i-note"/></svg>
  </div>
</footer>
<script src="model.js"></script>
</body>
</html>
```

FILE: styles.css
```css
* { box-sizing: border-box; }
body {
  margin: 0; height: 100vh; overflow: hidden;
  display: flex; flex-direction: column;
  background: #a0a0a0; color: #3c3c3c;
  font: 11px/15px "Noto Sans", "Open Sans", sans-serif;
}
button {
  display: flex; align-items: center; justify-content: center;
  margin: 0; padding: 0; border: 0; background: none; color: inherit; font: inherit;
}
.sprite { position: absolute; width: 0; height: 0; }
svg { flex: none; }
.i10 { width: 10px; height: 10px; }
.i12 { width: 12px; height: 12px; }
.i14 { width: 14px; height: 14px; }
.i16 { width: 16px; height: 16px; }
.i18 { width: 18px; height: 18px; }
.i20 { width: 20px; height: 20px; }
.i32 { width: 32px; height: 32px; }
.dark { color: #333; }
.flip { transform: scaleX(-1); }
.caret {
  display: inline-block; width: 0; height: 0; vertical-align: middle;
  border: solid transparent; border-width: 4px 4px 0; border-top-color: #555;
}
.caret.dim { border-top-color: #aaa; }
.on { background: #dcdcdc; border: 1px solid #a5a5a5; }

.desktop { flex: 1; min-height: 0; display: flex; }
.window {
  flex: 1; min-width: 0; display: flex; flex-direction: column;
  border: 4px solid #a3a3a3; border-right-width: 3px; background: #ececec;
}

.titlebar { display: grid; grid-template-columns: 1fr auto 1fr; align-items: center; height: 32px; padding: 0 10px 4px 12px; background: #e5e5e5; }
.titlebar h1 { margin: 0; font-size: 12px; font-weight: 400; color: #333; }
.quick { display: flex; align-items: center; gap: 8px; }
.quick button { gap: 6px; height: 20px; }
.app-icon { margin-right: 10px; }
.quick .customize { border-left: 1px solid #aaa; padding-left: 8px; margin-left: -4px; }
.quick button:nth-of-type(1) { border-left: 1px solid #b5b5b5; padding-left: 6px; margin-left: -6px; }
.lined { position: relative; }
.lined::before { content: ""; position: absolute; left: -4px; top: -7px; width: 8px; height: 1px; background: #333; }
.controls { display: flex; justify-content: flex-end; gap: 15px; }

.tabs { display: flex; height: 26px; gap: 1px; background: #e5e5e5; }
.tab { background: #cbced0; font-size: 14px; color: #4c4c4c; height: 26px; padding-bottom: 3px; }
.tab.file { width: 73px; background: #696969; color: #e5e5e5; margin-right: -1px; }
.tab.model { width: 83px; }
.tab.analysis { width: 93px; }
.tab.annotate { width: 101px; }
.tab.tools { width: 74px; }
.tab.view { width: 72px; }
.tab.flexible { width: 158px; }
.tab.apps { width: 122px; }
.tab.active { background: #f7f7f8; color: #333; border: 1px solid #d0d0d0; border-bottom: 0; }
.help-tools { display: flex; align-items: center; gap: 8px; margin-left: auto; padding: 0 4px 8px 0; }
.help-tools button { gap: 6px; }

.ribbon { display: flex; height: 108px; flex: none; background: #f7f7f8; border-top: 1px solid #c8ccd0; border-bottom: 2px solid #a3a3a3; }
.group { display: flex; flex-direction: column; border-right: 1px solid #b8bcc0; }
.group > footer { height: 22px; background: #f0f0f1; text-align: center; line-height: 21px; }
.items { flex: 1; display: flex; align-items: flex-start; padding-top: 5px; }
.g-visibility { width: 122px; }
.g-appearance { width: 127px; }
.g-orientation { width: 439px; }
.g-display { width: 219px; }
.g-show { width: 127px; }
.g-window { width: 166px; }
.big { flex-direction: column; gap: 9px; line-height: 15px; white-space: nowrap; }
.w36 { width: 36px; }
.w46 { width: 46px; }
.w48 { width: 48px; }
.w50 { width: 50px; }
.w56 { width: 56px; }
.w66 { width: 66px; }
.w70 { width: 70px; }
.w84 { width: 84px; }
.off { color: #a9a9a9; }
.stack { display: flex; flex-direction: column; gap: 10px; padding-left: 2px; }
.small { justify-content: flex-start; height: 16px; gap: 4px; }
.small .caret { margin-left: 3px; }
.zoom-stack { width: 86px; padding-left: 1px; border-right: 1px solid #ddd; }
.first { margin-left: 5px; }
.rule { width: 1px; height: 66px; margin: 0 0 0 7px; background: #ddd; }
.show-grid { display: grid; grid-template-columns: repeat(5, 24px); row-gap: 15px; align-content: start; justify-content: center; padding-top: 9px; }
.show-grid button { height: 24px; }

main { flex: 1; min-height: 0; display: flex; border-bottom: 2px solid #a3a3a3; }
.panel { width: 328px; flex: none; display: flex; flex-direction: column; padding-bottom: 5px; border-right: 2px solid #999; background: #eee; }
.panel-tabs { display: flex; height: 28px; background: #c9c9c9; }
.ptab { gap: 5px; padding: 0 4px; border-right: 1px solid #a5a5a5; border-bottom: 1px solid #a5a5a5; background: #d6d6d6; color: #777; }
.ptab.active { width: 98px; background: #eee; border-bottom: 0; color: #333; }
.folders { width: 118px; }
.favs { width: 87px; }
.panel-head { display: flex; align-items: center; gap: 8px; height: 29px; padding: 0 10px 0 28px; }
.panel-head h2 { flex: 1; margin: 0; font-size: 12px; font-weight: 600; }
.panel-head button { gap: 7px; }
.filter { display: flex; align-items: center; gap: 4px; height: 26px; padding: 0 12px; margin-bottom: 5px; }
.filter-box { position: relative; flex: 1; display: flex; align-items: center; }
.filter-box input { width: 100%; height: 27px; border: 1px solid #bbb; background: #fff; }
.filter-box svg { position: absolute; right: 5px; }
.filter button { width: 12px; }
.filter button:last-child { margin-left: 5px; }
.tree { flex: 1; margin: 0 6px 0 8px; padding: 0; list-style: none; background: #fff; border-top: 1px solid #ccc; }
.tree li { display: flex; align-items: center; gap: 10px; height: 20px; padding-left: 4px; }
.tree .child { padding-left: 24px; }
.tree .i12 { margin: 0 1px; }

.canvas { position: relative; flex: 1; min-width: 0; background: #e9e9ee; }
.scene { display: block; width: 100%; height: 100%; }
.mark { font: 44px "Liberation Mono", monospace; fill: #f1f1f4; fill-opacity: .8; filter: drop-shadow(1px 1px 0 #77777a); }
.mark-cjk { font: 300 56px "Noto Sans CJK SC", sans-serif; }
.view-bar { position: absolute; top: 7px; left: 50%; transform: translateX(-50%); display: flex; gap: 2px; padding: 2px 4px; border: 1px solid #aaa; background: #f8f8f8; }
.view-bar button { position: relative; width: 24px; height: 24px; }
.more::after { content: ""; position: absolute; right: 0; bottom: 2px; border: 2px solid #444; border-top-color: transparent; border-left-color: transparent; }

.status { display: flex; align-items: center; gap: 4px; height: 32px; padding: 0 2px 0 6px; background: #eee; }
.status button { width: 22px; height: 22px; }
.divider { width: 1px; height: 22px; margin-left: 5px; background: #aaa; }
.status .regen { margin-left: auto; border-left: 1px solid #aaa; height: 26px; width: 60px; justify-content: flex-start; padding-left: 3px; }
.find { display: flex; width: 44px; height: 24px; border: 1px solid #bbb; background: #f8f8f8; }
.find button:first-child { width: 27px; border-right: 1px solid #bbb; }
.find button:last-child { width: 16px; }
.select { position: relative; width: 165px; margin-left: 87px; }
.select select { display: block; appearance: none; width: 100%; height: 23px; padding: 0 7px; border: 1px solid #aaa; border-radius: 0; background: linear-gradient(#aaa, #aaa) right 15px top / 1px 100% no-repeat, #f7f7f7; color: #444; font: inherit; }
.select .caret { position: absolute; right: 4px; top: 10px; }
.grip { width: 12px; height: 12px; align-self: flex-end; }

.backdrop { width: 66px; flex: none; display: flex; flex-direction: column; border-left: 1px solid #ccc; border-top: 2px solid #c0c0c0; background: #e5e5e5; }
.back-top { height: 56px; border-bottom: 1px solid #c5c8cb; }
.back-controls { display: flex; justify-content: flex-end; gap: 15px; padding: 6px 7px 0 0; }
.back-help { display: flex; align-items: center; gap: 8px; padding: 13px 0 0 11px; }
.back-help .caret { flex: none; margin-right: 1px; }
.back-help .i16:first-child { margin-right: -2px; }
.back-ribbon { height: 107px; margin-left: 3px; border-left: 1px solid #c5c8cb; background: linear-gradient(#f7f7f8 84px, #f0f0f1 84px); border-bottom: 1px solid #a8a8a8; }
.back-canvas { flex: 1; background: #e9e9ee; border-bottom: 2px solid #a3a3a3; }
.back-status { height: 36px; padding-top: 5px; background: #eee; }
.back-select { display: flex; align-items: center; justify-content: flex-end; width: 51px; height: 24px; padding-right: 3px; border: 1px solid #aaa; border-left: 0; background: linear-gradient(#aaa, #aaa) right 14px top / 1px 100% no-repeat, #f7f7f7; }

.taskbar { display: flex; height: 26px; flex: none; background: #474747; color: #fff; }
.taskbar button { height: 28px; }
.start { width: 36px; background: #1e1e1e; }
.search { display: flex; align-items: center; width: 258px; height: 28px; padding: 2px 0 0 12px; background: #f2f2f2; }
.search input { flex: 1; min-width: 0; border: 0; padding: 0 12px; background: none; color: #222; font: 14px "Noto Sans", sans-serif; }
.search input::placeholder { color: #333; }
.brush { width: 56px; height: 30px; }
.taskbar .task { width: 38px; padding-top: 2px; background: #3a474e; }
.taskbar .task:nth-of-type(4) { width: 36px; }
.taskbar .task:nth-of-type(5) { background: #434749; }
.taskbar .task.current { width: 34px; background: #666; }
.tray { display: flex; align-items: center; gap: 11px; height: 28px; padding-top: 2px; margin-left: auto; padding-right: 20px; font-size: 12px; }
.note { margin-left: 7px; }
```

FILE: model.js
```javascript
const NS = "http://www.w3.org/2000/svg";

function add(parent, name, attrs) {
  const node = document.createElementNS(NS, name);
  for (const key in attrs) node.setAttribute(key, attrs[key]);
  parent.appendChild(node);
  return node;
}

// Isometric circle point: major axis at -60 degrees, minor axis along the shaft.
function iso(cx, cy, r, t) {
  const u = r * Math.cos(t), v = r * 0.577 * Math.sin(t);
  return [cx + u * 0.5 + v * 0.866, cy - u * 0.866 + v * 0.5];
}

function poly(parent, points, fill, width = 0.8) {
  add(parent, "polygon", { points: points.map(p => p.map(n => n.toFixed(1)).join()).join(" "), fill, stroke: "#1d1505", "stroke-width": width, "stroke-linejoin": "round" });
}

function disc(parent, cx, cy, r, fill) {
  const points = [];
  for (let i = 0; i < 60; i++) points.push(iso(cx, cy, r, i * Math.PI / 30));
  poly(parent, points, fill);
}

function shaft(parent, cx, cy, r, length) {
  const points = [];
  for (let i = 0; i <= 30; i++) points.push(iso(cx, cy, r, Math.PI + i * Math.PI / 30));
  for (let i = 0; i <= 30; i++) points.push(iso(cx + length * 0.866, cy + length * 0.5, r, i * Math.PI / 30));
  const [x1, y1] = iso(cx, cy, r, 0);
  const [x2, y2] = iso(cx, cy, r, Math.PI);
  const id = "shaft" + Math.round(cx);
  add(parent, "linearGradient", { id, gradientUnits: "userSpaceOnUse", x1, y1, x2, y2, href: "#shaft" });
  poly(parent, points, `url(#${id})`);
}

function drawGear() {
  const g = document.getElementById("gear");
  const cx = 645, cy = 386.5, teeth = 40, step = 2 * Math.PI / teeth;
  const ring = [];
  for (let i = 0; i < teeth; i++) {
    const t = i * step;
    ring.push([69.5, t], [69.5, t + step * 0.45], [77.5, t + step * 0.5], [77.5, t + step * 0.95]);
  }
  const front = ring.map(([r, t]) => iso(cx, cy, r, t));
  const back = front.map(([x, y]) => [x - 20, y - 11.6]);
  poly(g, back, "#5c4312");
  const depth = p => p[0] * 0.866 + p[1] * 0.5;
  const order = front.map((p, i) => i).sort((a, b) => depth(front[b]) - depth(front[a]));
  for (const i of order) {
    const j = (i + 1) % front.length;
    const fill = i % 4 === 2 ? "#dc9d38" : i % 4 === 0 ? "#8a6423" : "#6b4e17";
    poly(g, [front[i], front[j], back[j], back[i]], fill);
  }
  poly(g, front, "#654a16");
  disc(g, 647, 387, 45, "#8a6420");
  disc(g, 649, 388, 43, "#654a16");
  shaft(g, 649, 388, 35.3, 90);
}

const FACE = "M461,268 L461,345 C510,315 560,312 600,320 C640,335 662,365 671,395 L610,430 L610,500 L525,685 C510,710 490,735 462,760 L461,695 C440,705 420,718 400,722 C350,725 300,710 265,668 L248,636 L312,600 C312,470 370,350 461,268 Z";
const RIDGE = "M461,345 C510,315 560,312 600,320 C620,328 636,340 646,352 L616,334 C606,322 590,310 570,302 C530,294 480,297 431,327 Z";

function drawBlades() {
  const root = document.getElementById("blades");
  const line = { stroke: "#1d1505", "stroke-width": 2.600, "stroke-linejoin": "round" };
  add(root, "path", { d: "M-414,232 Q-390,290 -345,330 L295,704 L420,700 L620,380 L622,329 L-40,-55 Q-75,-76 -130,-72 L-201,-39 Z", fill: "#5c4312", ...line });
  for (let k = 11; k >= 0; k--) {
    const g = add(root, "g", { transform: `translate(${-60.2 * k} ${-34.9 * k})` });
    if (k < 11) add(g, "path", { d: RIDGE, fill: "#8a6420", transform: "translate(-30 -17)", ...line });
    add(g, "path", { d: RIDGE, fill: k < 1 ? "#c48d31" : "#77561b", ...line });
    add(g, "path", { d: "M430,706 L461,694 L461,760 L430,742 Z", fill: "#cf9434", ...line });
    add(g, "path", { d: FACE, fill: "#654a16", ...line });
    add(g, "path", { d: "M378,342 C300,400 258,490 252,594 L284,608 C290,500 318,410 378,342 Z", fill: "url(#rim)", ...line });
    add(g, "path", { d: "M425,262 C330,345 282,470 282,592 L311,602 C312,470 370,350 461,272 L437,262 Z", fill: "url(#rim)", ...line });
    add(g, "path", { d: "M228,626 L248,636 Q262,668 298,700 Q246,672 228,626 Z", fill: "#a87626", ...line });
    add(g, "path", { d: "M228,626 L284,592 L312,600 L248,636 Z", fill: "#d39735", ...line });
  }
}

function drawFrontShaft() {
  const g = document.getElementById("front");
  shaft(g, 934.5, 552.8, 35.3, 51.4);
  disc(g, 979, 578.5, 35.3, "#654a16");
  disc(g, 979, 579, 11, "#4b360e");
  disc(g, 981, 580, 7.500, "#c58b30");
}

drawGear();
drawBlades();
drawFrontShaft();
```
